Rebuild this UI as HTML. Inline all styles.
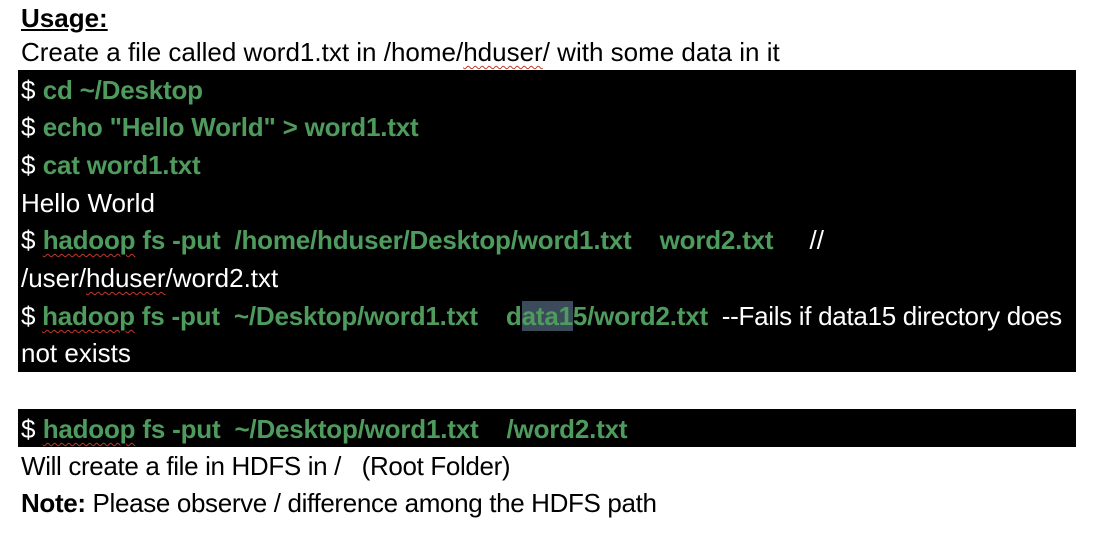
<!DOCTYPE html>
<html><head><style>
body{margin:0;width:1107px;height:533px;background:#fff;overflow:hidden;position:relative;font-family:"Liberation Sans",sans-serif;font-size:26px;}
.l{position:absolute;left:21px;height:37px;line-height:37px;white-space:pre;letter-spacing:0px;}
.box{position:absolute;background:#000;left:18px;width:1058px;}
.w{color:#fff}
.g{color:#4e9b5d;font-weight:bold;letter-spacing:-0.2px}
.sq{text-decoration:underline wavy #c0392b;text-decoration-thickness:1px;text-underline-offset:4px}
.hl{background:#3b4b5b}
</style></head><body>
<div class="l" style="top:0;font-weight:bold;text-decoration:underline;">Usage:</div>
<div class="l" style="top:34px">Create a file called word1.txt in /home/<span class="sq">hduser</span>/ with some data in it</div>
<div class="box" style="top:70px;height:302px"></div>
<div class="l w" style="top:72px">$ <span class="g">cd ~/Desktop</span></div>
<div class="l w" style="top:109px">$ <span class="g">echo "Hello World" &gt; word1.txt</span></div>
<div class="l w" style="top:147px">$ <span class="g">cat word1.txt</span></div>
<div class="l w" style="top:185px">Hello World</div>
<div class="l w" style="top:222px">$ <span class="g"><span class="sq">hadoop</span> fs -put  /home/hduser/Desktop/word1.txt    word2.txt</span>     //</div>
<div class="l w" style="top:260px">/user/<span class="sq">hduser</span>/word2.txt</div>
<div class="l w" style="top:298px;letter-spacing:-0.3px">$ <span class="g"><span class="sq">hadoop</span> fs -put  ~/Desktop/word1.txt    d<span class="hl">ata1</span>5/word2.txt</span>  --Fails if data15 directory does</div>
<div class="l w" style="top:335px">not exists</div>
<div class="box" style="top:409px;height:38px"></div>
<div class="l w" style="top:411px">$ <span class="g"><span class="sq">hadoop</span> fs -put  ~/Desktop/word1.txt    /word2.txt</span></div>
<div class="l" style="top:448px;letter-spacing:-0.35px">Will create a file in HDFS in /   (Root Folder)</div>
<div class="l" style="top:485px;letter-spacing:-0.35px"><b>Note:</b> Please observe / difference among the HDFS path</div>
</body></html>
